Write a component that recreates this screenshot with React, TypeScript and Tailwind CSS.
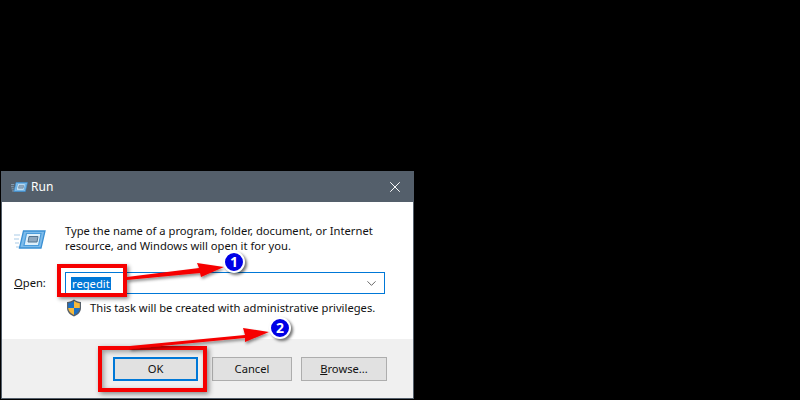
import { ChevronDown, X } from 'lucide-react';

function RunIcon({ width, height }: { width: number; height: number }) {
  return (
    <svg width={width} height={height} viewBox="0 0 32 19" className="shrink-0">
      <path d="M0 5h6M0 9h5M1 13h4M2 17h4" stroke="#a9cbe8" strokeWidth="1.200" />
      <path d="M9.500 1H31l-4 17H5.500z" fill="#7dbbea" stroke="#3a90d4" strokeWidth="1.300" />
      <path d="M12.500 3.500h14.500l-2.500 12H10z" fill="#dff0fb" stroke="#4a9cdc" strokeWidth="1.200" />
      <path d="M15 6.500h9l-1 5.500h-9z" fill="#8fa8bf" stroke="#55748f" strokeWidth="1" />
    </svg>
  );
}

function Shield() {
  return (
    <svg width="16" height="18" viewBox="0 0 16 18" className="shrink-0">
      <path d="M8 0.500C6 2 3.500 3 1 3v6c0 4 3 7 7 8.500 4-1.500 7-4.500 7-8.500V3c-2.500 0-5-1-7-2.500z" fill="#57606a" />
      <path d="M8 2C6.300 3.200 4.300 4 2.200 4.200V9h5.800z" fill="#1b6fc4" />
      <path d="M8 2c1.700 1.200 3.700 2 5.800 2.200V9H8z" fill="#f6b93b" />
      <path d="M2.200 9H8v7C5 14.700 2.400 12.300 2.200 9z" fill="#f6b93b" />
      <path d="M13.800 9H8v7c3-1.300 5.600-3.700 5.800-7z" fill="#1b6fc4" />
    </svg>
  );
}

function Badge({ n, className }: { n: string; className: string }) {
  return (
    <div className={`absolute flex h-[22px] w-[22px] items-center justify-center rounded-full border-2 border-white bg-[#0000e6] text-[14px] font-bold leading-none text-white shadow-[2px_2px_3px_rgba(0,0,0,0.55)] ${className}`}>
      {n}
    </div>
  );
}

function DialogButton({ children, className = '' }: { children: React.ReactNode; className?: string }) {
  return (
    <div className={`flex h-6 items-center justify-center bg-[#e1e1e1] text-[11.200px] text-[#111] ${className}`}>
      {children}
    </div>
  );
}

export default function App() {
  return (
    <div className="relative h-[400px] w-[800px] overflow-hidden bg-black pl-px pt-[171px] font-['Noto_Sans',sans-serif]">
      <div className="flex h-[228px] w-[413px] flex-col border border-[#545f6b]">
        <div className="flex h-[30px] shrink-0 items-center bg-[#545f6b] pl-[9px] pr-[9px] text-[12px] text-white">
          <RunIcon width={17} height={10} />
          <span className="ml-[3px]">Run</span>
          <X size={18} strokeWidth={1.300} className="ml-auto text-white" />
        </div>
        <div className="flex h-[137px] shrink-0 flex-col bg-white pl-[12px] pt-[21px]">
          <div className="flex">
            <div className="w-[51px] shrink-0 pt-[7px]">
              <RunIcon width={32} height={19} />
            </div>
            <p className="text-[11.200px] leading-[15px] text-[#111]">
              Type the name of a program, folder, document, or Internet<br />
              resource, and Windows will open it for you.
            </p>
          </div>
          <div className="mt-[19px] flex items-center">
            <span className="w-[51px] shrink-0 text-[11.200px] text-[#111]"><u>O</u>pen:</span>
            <div className="flex h-[22px] w-[320px] items-center border border-[#0078d7] pl-[5px] pr-[5px]">
              <span className="bg-[#0078d7] px-px text-[11.200px] leading-[13px] text-white">regedit</span>
              <ChevronDown size={15} strokeWidth={1.300} className="ml-auto text-[#444]" />
            </div>
          </div>
          <div className="mt-[5px] flex items-center pl-[52px]">
            <Shield />
            <span className="ml-[8px] text-[11.200px] text-[#111]">This task will be created with administrative privileges.</span>
          </div>
        </div>
        <div className="flex flex-1 justify-start bg-[#f0f0f0] pl-[111px] pt-[18px]">
          <DialogButton className="w-[85px] border-2 border-[#0078d7]">OK</DialogButton>
          <DialogButton className="ml-[14px] w-[80px] border border-[#adadad]">Cancel</DialogButton>
          <DialogButton className="ml-[9px] w-[86px] border border-[#adadad]"><u>B</u>rowse...</DialogButton>
        </div>
      </div>

      <div className="absolute left-[57px] top-[264px] h-[33px] w-[70px] border-4 border-[#f60000] shadow-[2px_2px_4px_rgba(0,0,0,0.45)]" />
      <div className="absolute left-[98px] top-[346px] h-[46px] w-[109px] border-4 border-[#f60000] shadow-[2px_2px_5px_rgba(0,0,0,0.45),inset_2px_2px_5px_rgba(0,0,0,0.35)]" />

      <svg width="800" height="400" className="pointer-events-none absolute left-0 top-0">
        <defs>
          <filter id="sh" x="-10%" y="-50%" width="120%" height="220%">
            <feDropShadow dx="1" dy="2" stdDeviation="1.500" floodColor="#000" floodOpacity="0.45" />
          </filter>
        </defs>
        <path d="M127 277L199 268L197 263L224 267L201 277L200 273L127 280z" fill="#f60000" filter="url(#sh)" />
        <path d="M130 346L245 335L243 328L269 332L245 342L245 338L130 349z" fill="#f60000" filter="url(#sh)" />
      </svg>

      <Badge n="1" className="left-[223px] top-[251px]" />
      <Badge n="2" className="left-[269px] top-[317px]" />
    </div>
  );
}
